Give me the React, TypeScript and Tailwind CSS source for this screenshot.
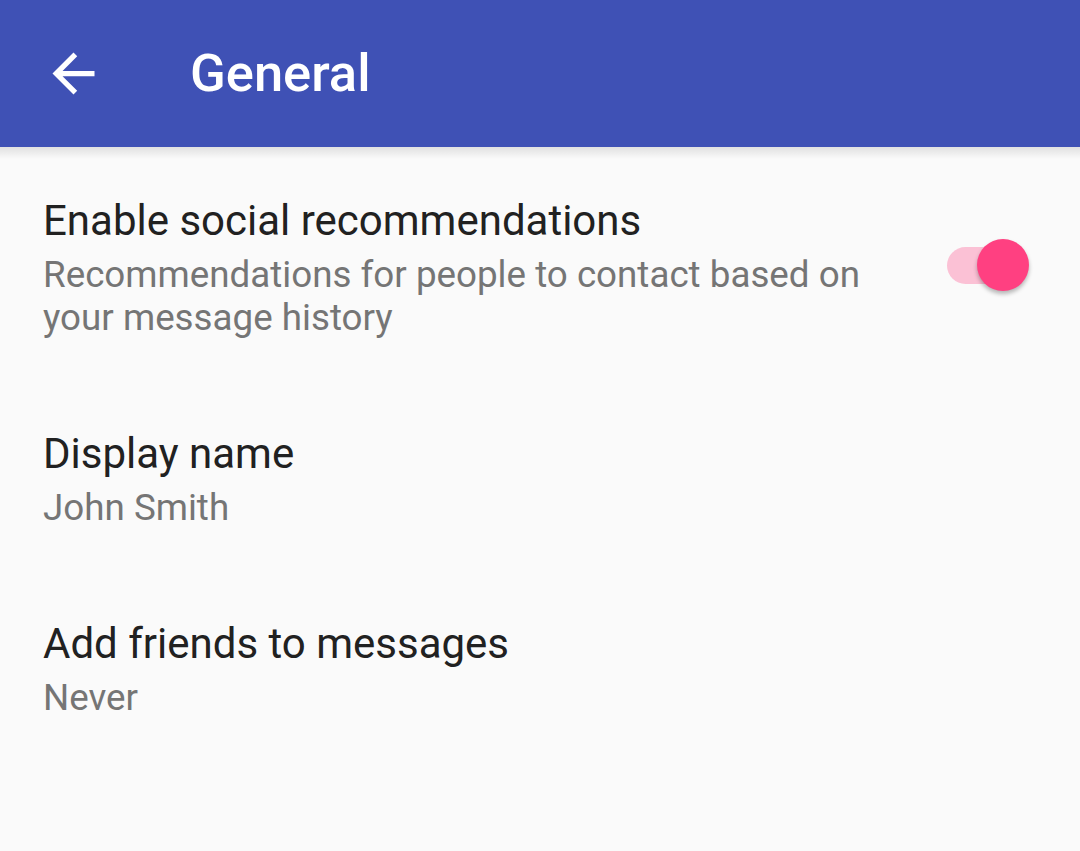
import React from 'react';

interface PrefRowProps {
  title: string;
  summary: string;
  checked?: boolean;
}

const ArrowBack = () => (
  <svg viewBox="0 0 24 24" className="w-[63px] h-[63px]" fill="#ffffff">
    <path d="M20 11H7.83l5.59-5.59L12 4l-8 8 8 8 1.41-1.41L7.83 13H20v-2z" />
  </svg>
);

const Switch = ({ checked }: { checked: boolean }) => (
  <div className="relative w-[90px] h-[54px] flex items-center -mt-[4px]">
    <div className={`ml-[3px] w-[72px] h-[37px] rounded-full ${checked ? 'bg-[#fbc1d5]' : 'bg-[#b9b9b9]'}`} />
    <div
      className={`absolute top-0 ${checked ? 'left-[33px]' : 'left-0'} w-[52px] h-[52px] rounded-full ${
        checked ? 'bg-[#ff4081]' : 'bg-[#f1f1f1]'
      } shadow-[0_3px_4px_rgba(0,0,0,0.28)]`}
    />
  </div>
);

const PrefRow: React.FC<PrefRowProps> = ({ title, summary, checked }) => (
  <div className="flex items-center pl-[43px] pr-[46px] py-[45px]">
    <div className="flex-1 min-w-0">
      <div className="text-[42px] leading-[49px] text-[#212121]">{title}</div>
      <div className="mt-[8px] text-[36.75px] leading-[43px] text-[#757575] pr-[60px]">{summary}</div>
    </div>
    {checked !== undefined && <Switch checked={checked} />}
  </div>
);

export default function App() {
  return (
    <div className="w-[1080px] h-[851px] bg-[#fafafa] overflow-hidden font-['Roboto',sans-serif]">
      {/* App bar */}
      <div className="relative h-[147px] bg-[#3f51b5] flex items-center">
        <div className="ml-[42px] w-[63px] h-[63px] flex items-center justify-center">
          <ArrowBack />
        </div>
        <div className="ml-[85px] text-[52.5px] font-medium text-white leading-none">General</div>
        <div className="absolute left-0 right-0 top-full h-[12px] bg-gradient-to-b from-[rgba(0,0,0,0.10)] to-transparent" />
      </div>

      <div className="pt-[4px]">
        <PrefRow
          title="Enable social recommendations"
          summary="Recommendations for people to contact based on your message history"
          checked={true}
        />
        <PrefRow title="Display name" summary="John Smith" />
        <PrefRow title="Add friends to messages" summary="Never" />
      </div>
    </div>
  );
}
